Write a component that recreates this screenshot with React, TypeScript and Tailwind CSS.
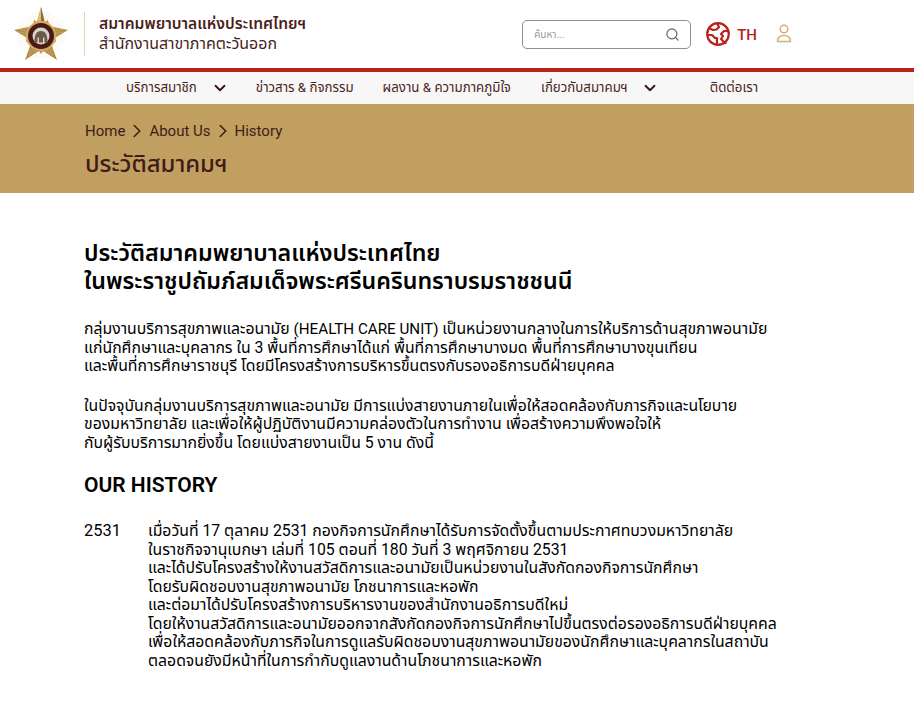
import { ChevronDown, ChevronRight, Search } from "lucide-react";

const crumbs = ["Home", "About Us", "History"];

const history = [
  "เมื่อวันที่ 17 ตุลาคม 2531 กองกิจการนักศึกษาได้รับการจัดตั้งขึ้นตามประกาศทบวงมหาวิทยาลัย",
  "ในราชกิจจานุเบกษา เล่มที่ 105 ตอนที่ 180 วันที่ 3 พฤศจิกายน 2531",
  "และได้ปรับโครงสร้างให้งานสวัสดิการและอนามัยเป็นหน่วยงานในสังกัดกองกิจการนักศึกษา",
  "โดยรับผิดชอบงานสุขภาพอนามัย โภชนาการและหอพัก",
  "และต่อมาได้ปรับโครงสร้างการบริหารงานของสำนักงานอธิการบดีใหม่",
  "โดยให้งานสวัสดิการและอนามัยออกจากสังกัดกองกิจการนักศึกษาไปขึ้นตรงต่อรองอธิการบดีฝ่ายบุคคล",
  "เพื่อให้สอดคล้องกับภารกิจในการดูแลรับผิดชอบงานสุขภาพอนามัยของนักศึกษาและบุคลากรในสถาบัน",
  "ตลอดจนยังมีหน้าที่ในการกำกับดูแลงานด้านโภชนาการและหอพัก",
];

function Logo() {
  const rays = Array.from({ length: 48 }, (_, i) => i * 7.5);
  return (
    <svg viewBox="0 0 56 54" className="h-[54px] w-[56px]">
      <polygon
        points="28,0 32,15 35,13 36,19 55,23 42,31 43,35 38,36 44,53 30,44 28,47 26,44 12,53 18,36 13,35 14,31 1,23 20,19 21,13 24,15"
        fill="#b48d48"
      />
      {rays.map((r) => (
        <line key={r} x1="28" y1="28" x2="28" y2="4" stroke="#ecd49a" strokeWidth="0.6" transform={`rotate(${r} 28 28)`} opacity="0.4" />
      ))}
      <polygon points="28,0 28,15 31,14" fill="#8a6a30" />
      <polygon points="28,0 28,15 25,14" fill="#e0c07c" />
      <circle cx="28" cy="29" r="15" fill="#d2ab62" />
      <circle cx="28" cy="29" r="13" fill="#4a1a16" />
      <circle cx="28" cy="29" r="8.5" fill="#d8d3c8" />
      <path d="M21.5 35.5c0-7 1.5-11.5 6.5-11.5s6.5 4.5 6.5 11.5h-3v-5h-1.5v5h-4v-5h-1.5v5z" fill="#6b5a4c" />
    </svg>
  );
}

function Globe() {
  return (
    <svg viewBox="0 0 24 24" fill="none" stroke="#b9211b" strokeWidth="2.2" strokeLinejoin="round" strokeLinecap="round" className="size-6">
      <circle cx="12" cy="12" r="10.8" />
      <path d="M11 1.5 13 5l-2.5 2.5L7 8 4 6.5" />
      <path d="M22 9h-4l-3 3 2 2-2 3 3 3 1.5 1" />
      <path d="M2 13l4 0 3 3 2 0 0 6" />
    </svg>
  );
}

function User() {
  return (
    <svg viewBox="0 0 16 20" fill="none" stroke="#d3ae6c" strokeWidth="1.4" className="h-[20px] w-[16px]">
      <circle cx="8" cy="5" r="3.8" />
      <path d="M1.5 17.5c0-4 2.5-6 6.5-6s6.5 2 6.5 6z" strokeLinejoin="round" />
    </svg>
  );
}

export default function App() {
  return (
    <div className="min-h-[702px] bg-white font-['Roboto','Noto_Sans_Thai','Noto_Sans',sans-serif] text-[#000]">
      <header className="flex h-[68px] items-center">
        <div className="ml-[13px] flex items-center">
          <Logo />
          <div className="ml-[15px] h-[44px] w-px bg-[#e6d3a8]" />
          <div className="ml-[14px] text-[#4a1f1c]">
            <p className="text-[15.6px] font-semibold leading-[19px]">สมาคมพยาบาลแห่งประเทศไทยฯ</p>
            <p className="text-[16px] leading-[19px]">สำนักงานสาขาภาคตะวันออก</p>
          </div>
        </div>
        <div className="ml-auto mr-[122px] flex items-center">
          <div className="mt-[1px] flex h-[29px] w-[169px] items-center justify-between rounded-[5px] border border-[#8f8f8f] pl-[11px] pr-[10px]">
            <span className="text-[10px] text-[#9b9b9b]">ค้นหา...</span>
            <Search className="size-[15px] text-[#5f5f5f]" strokeWidth={1.8} />
          </div>
          <div className="ml-[15px]"><Globe /></div>
          <span className="ml-[7px] pt-[2px] text-[15px] font-medium text-[#b9211b]">TH</span>
          <div className="ml-[19px]"><User /></div>
        </div>
      </header>
      <div className="h-[4px] bg-[#b9211b]" />
      <nav className="flex h-[32px] items-center bg-[#f7f7f7] pl-[126px] text-[13.3px] text-[#4a1f1c]">
        <div className="mr-[27px] flex items-center">
          <span>บริการสมาชิก</span>
          <ChevronDown className="ml-[14px] size-[18px] text-[#331512]" strokeWidth={2.4} />
        </div>
        <span className="mr-[29px]">ข่าวสาร &amp; กิจกรรม</span>
        <span className="mr-[30px]">ผลงาน &amp; ความภาคภูมิใจ</span>
        <div className="mr-[51px] flex items-center">
          <span>เกี่ยวกับสมาคมฯ</span>
          <ChevronDown className="ml-[13px] size-[18px] text-[#331512]" strokeWidth={2.4} />
        </div>
        <span>ติดต่อเรา</span>
      </nav>
      <section className="h-[89px] bg-[#c19f61] pl-[85px] pt-[17px] text-[#3f1c17]">
        <div className="flex h-[20px] items-center text-[15px]">
          {crumbs.map((c, i) => (
            <div key={c} className="flex items-center">
              {i > 0 && <ChevronRight className="mx-[1px] size-[22px]" strokeWidth={1.7} />}
              <span>{c}</span>
            </div>
          ))}
        </div>
        <h1 className="mt-[8px] text-[23.8px] font-medium leading-[30px]">ประวัติสมาคมฯ</h1>
      </section>
      <main className="pl-[84px] pt-[46px]">
        <h2 className="text-[23.2px] font-semibold leading-[28px]">
          ประวัติสมาคมพยาบาลแห่งประเทศไทย
          <br />
          ในพระราชูปถัมภ์สมเด็จพระศรีนครินทราบรมราชชนนี
        </h2>
        <p className="mt-[25px] text-[15.8px] leading-[18.5px]">
          กลุ่มงานบริการสุขภาพและอนามัย <span className="text-[15.2px]">(HEALTH CARE UNIT)</span> เป็นหน่วยงานกลางในการให้บริการด้านสุขภาพอนามัย
          <br />
          แก่นักศึกษาและบุคลากร ใน 3 พื้นที่การศึกษาได้แก่ พื้นที่การศึกษาบางมด พื้นที่การศึกษาบางขุนเทียน
          <br />
          และพื้นที่การศึกษาราชบุรี โดยมีโครงสร้างการบริหารขึ้นตรงกับรองอธิการบดีฝ่ายบุคคล
        </p>
        <p className="mt-[21px] text-[15.8px] leading-[18.5px]">
          ในปัจจุบันกลุ่มงานบริการสุขภาพและอนามัย มีการแบ่งสายงานภายในเพื่อให้สอดคล้องกับภารกิจและนโยบาย
          <br />
          ของมหาวิทยาลัย และเพื่อให้ผู้ปฏิบัติงานมีความคล่องตัวในการทำงาน เพื่อสร้างความพึงพอใจให้
          <br />
          กับผู้รับบริการมากยิ่งขึ้น โดยแบ่งสายงานเป็น 5 งาน ดังนี้
        </p>
        <h3 className="mt-[19px] text-[21px] font-semibold leading-[28px]">OUR HISTORY</h3>
        <div className="mt-[23px] flex text-[15.8px] leading-[18.5px]">
          <span className="w-[64px] shrink-0 text-[16.4px]">2531</span>
          <div>
            {history.map((line) => (
              <p key={line}>{line}</p>
            ))}
          </div>
        </div>
      </main>
    </div>
  );
}
